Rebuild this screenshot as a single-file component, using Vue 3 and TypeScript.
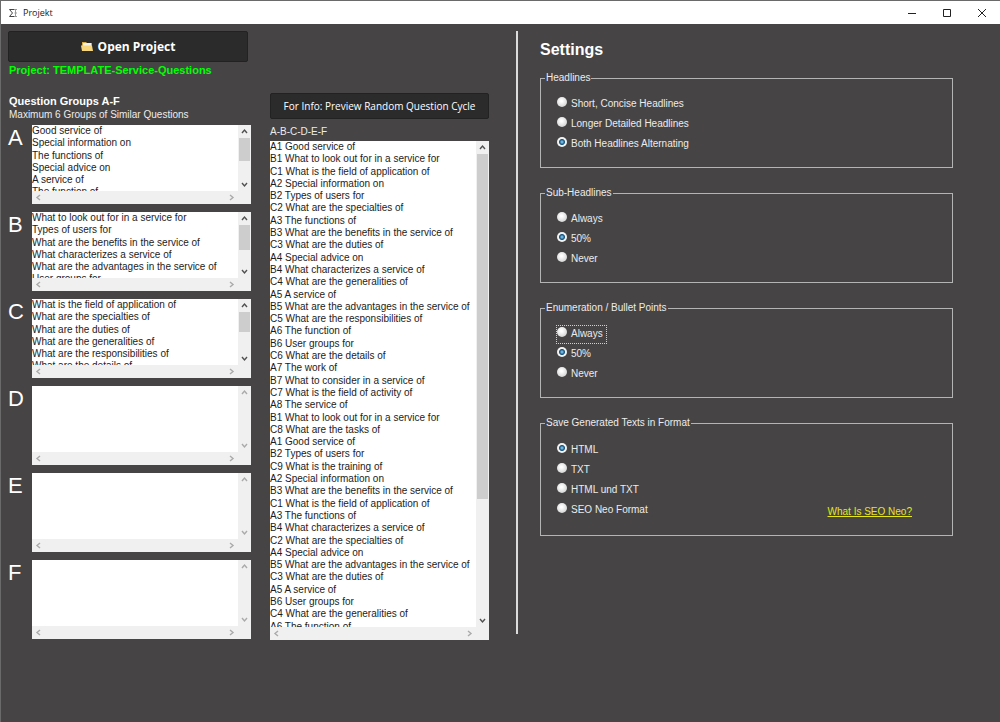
<script setup lang="ts">
import { reactive } from 'vue'

interface Group {
  letter: string
  lines: string[]
  thumb: number
}

interface Setting {
  key: string
  title: string
  options: string[]
  focused?: string
  link?: string
}

const groups: Group[] = [
  {
    letter: 'A',
    thumb: 23,
    lines: ['Good service of', 'Special information on', 'The functions of', 'Special advice on', 'A service of', 'The function of', 'The work of', 'The service of'],
  },
  {
    letter: 'B',
    thumb: 25,
    lines: ['What to look out for in a service for', 'Types of users for', 'What are the benefits in the service of', 'What characterizes a service of', 'What are the advantages in the service of', 'User groups for', 'What to consider in a service of'],
  },
  {
    letter: 'C',
    thumb: 20,
    lines: ['What is the field of application of', 'What are the specialties of', 'What are the duties of', 'What are the generalities of', 'What are the responsibilities of', 'What are the details of', 'What is the field of activity of', 'What are the tasks of', 'What is the training of'],
  },
  { letter: 'D', thumb: 0, lines: [] },
  { letter: 'E', thumb: 0, lines: [] },
  { letter: 'F', thumb: 0, lines: [] },
]

// One A, B and C question per turn; every group restarts when it runs out.
const preview: string[] = []
for (let turn = 0; turn < 14; turn++) {
  for (const g of groups.slice(0, 3)) {
    const i = turn % g.lines.length
    preview.push(`${g.letter}${i + 1} ${g.lines[i]}`)
  }
}

const settings: Setting[] = [
  { key: 'headlines', title: 'Headlines', options: ['Short, Concise Headlines', 'Longer Detailed Headlines', 'Both Headlines Alternating'] },
  { key: 'sub', title: 'Sub-Headlines', options: ['Always', '50%', 'Never'] },
  { key: 'bullets', title: 'Enumeration / Bullet Points', options: ['Always', '50%', 'Never'], focused: 'Always' },
  { key: 'format', title: 'Save Generated Texts in Format', options: ['HTML', 'TXT', 'HTML und TXT', 'SEO Neo Format'], link: 'What Is SEO Neo?' },
]

const chosen = reactive<Record<string, string>>({
  headlines: 'Both Headlines Alternating',
  sub: '50%',
  bullets: '50%',
  format: 'HTML',
})
</script>

<template>
  <div class="window">
    <header class="titlebar">
      <svg class="app-icon" viewBox="0 0 10 10" aria-hidden="true">
        <path d="M6 1.5H1.5L4.5 5L1.5 8.5H6" />
        <path class="thin" d="M7.5 1V9M6 1.5H9M6 8.5H9M6.5 5H9" />
      </svg>
      <span class="title">Projekt</span>
      <div class="controls">
        <button type="button" aria-label="Minimize"><svg viewBox="0 0 10 10"><path d="M1 5.5H9" /></svg></button>
        <button type="button" aria-label="Maximize"><svg viewBox="0 0 10 10"><path d="M1.5 1.5H8.5V8.5H1.5Z" /></svg></button>
        <button type="button" aria-label="Close"><svg viewBox="0 0 10 10"><path d="M1 1L9 9M9 1L1 9" /></svg></button>
      </div>
    </header>

    <main class="workspace">
      <section class="questions">
        <button type="button" class="dark open">
          <svg class="folder" viewBox="0 0 12 11" aria-hidden="true">
            <path d="M1 1H5L6 2H11V9H1Z" fill="#d9a845" />
            <path d="M2 2H10V6H2Z" fill="#f4f1e6" />
            <path d="M0 4.5H11L12 10H1Z" fill="#f8d77c" />
          </svg>
          Open Project
        </button>
        <p class="project">Project: TEMPLATE-Service-Questions</p>
        <h2>Question Groups A-F</h2>
        <p class="hint">Maximum 6 Groups of Similar Questions</p>

        <div class="groups">
          <div v-for="g in groups" :key="g.letter" class="group">
            <label :for="'group-' + g.letter">{{ g.letter }}</label>
            <div class="pane" :class="{ idle: !g.thumb }">
              <textarea :id="'group-' + g.letter" wrap="off" spellcheck="false" :value="g.lines.join('\n')"></textarea>
              <div class="vbar">
                <button type="button" aria-label="Scroll up"><svg viewBox="0 0 7 7"><path d="M1 5L3.5 2L6 5" /></svg></button>
                <div class="thumb" :style="{ height: g.thumb + 'px' }"></div>
                <button type="button" class="last" aria-label="Scroll down"><svg viewBox="0 0 7 7"><path d="M1 2L3.5 5L6 2" /></svg></button>
              </div>
              <div class="hbar">
                <button type="button" aria-label="Scroll left"><svg viewBox="0 0 7 7"><path d="M5 1L2 3.5L5 6" /></svg></button>
                <button type="button" aria-label="Scroll right"><svg viewBox="0 0 7 7"><path d="M2 1L5 3.5L2 6" /></svg></button>
              </div>
            </div>
          </div>
        </div>
      </section>

      <section class="cycle">
        <button type="button" class="dark info">For Info: Preview Random Question Cycle</button>
        <label for="preview">A-B-C-D-E-F</label>
        <div class="pane">
          <textarea id="preview" wrap="off" spellcheck="false" :value="preview.join('\n')"></textarea>
          <div class="vbar">
            <button type="button" aria-label="Scroll up"><svg viewBox="0 0 7 7"><path d="M1 5L3.5 2L6 5" /></svg></button>
            <div class="thumb long"></div>
            <button type="button" class="last" aria-label="Scroll down"><svg viewBox="0 0 7 7"><path d="M1 2L3.5 5L6 2" /></svg></button>
          </div>
          <div class="hbar">
            <button type="button" aria-label="Scroll left"><svg viewBox="0 0 7 7"><path d="M5 1L2 3.5L5 6" /></svg></button>
            <button type="button" aria-label="Scroll right"><svg viewBox="0 0 7 7"><path d="M2 1L5 3.5L2 6" /></svg></button>
          </div>
        </div>
      </section>

      <div class="divider"></div>

      <section class="settings">
        <h1>Settings</h1>
        <fieldset v-for="s in settings" :key="s.key">
          <legend>{{ s.title }}</legend>
          <div class="body" :class="{ linked: s.link }">
            <div class="options">
              <label v-for="o in s.options" :key="o" :class="{ focused: s.focused === o }">
                <input v-model="chosen[s.key]" type="radio" :name="s.key" :value="o" />
                <span>{{ o }}</span>
              </label>
            </div>
            <a v-if="s.link" href="#seo-neo">{{ s.link }}</a>
          </div>
        </fieldset>
      </section>
    </main>
  </div>
</template>

<style>
body {
  margin: 0;
  background: #464445;
}
</style>

<style scoped>
.window {
  box-sizing: border-box;
  min-height: 100vh;
  border: 1px solid #6a6a6a;
  border-width: 1px 0 0 1px;
  background: #464445;
  color: #ececec;
  font-family: "Liberation Sans", Arial, sans-serif;
  font-size: 10px;
  line-height: 14px;
}

h1,
h2,
p {
  margin: 0;
}

button {
  padding: 0;
  border: 0;
  background: none;
  color: inherit;
  font: inherit;
}

svg {
  display: block;
  fill: none;
}

.titlebar {
  display: flex;
  align-items: center;
  height: 23px;
  padding-left: 7px;
  background: #fff;
  color: #222;
}

.app-icon {
  width: 10px;
  height: 10px;
  stroke: #444;
}

.app-icon .thin {
  stroke: #999;
}

.title {
  margin-left: 5px;
  font: 9px/14px "Open Sans", "Noto Sans", sans-serif;
}

.controls {
  display: flex;
  margin: 0 1px 0 auto;
}

.controls button {
  display: grid;
  place-items: center;
  width: 35px;
  height: 23px;
}

.controls svg {
  width: 10px;
  height: 10px;
  stroke: #222;
}

.workspace {
  display: grid;
  grid-template-columns: minmax(0, 262fr) minmax(0, 246fr) 2px minmax(0, 435fr);
  padding: 7px 47px 0 7px;
}

.questions {
  margin-right: 19px;
}

.dark {
  display: flex;
  align-items: center;
  justify-content: center;
  box-sizing: border-box;
  border: 1px solid #222;
  border-radius: 2px;
  background: #2c2b2c;
  color: #fff;
  font-family: "Open Sans", "Noto Sans", sans-serif;
}

.open {
  gap: 5px;
  width: calc(100% - 3px);
  height: 31px;
  font-size: 12px;
  font-weight: 700;
}

.folder {
  width: 12px;
  height: 11px;
}

.project,
h2,
.hint {
  padding-left: 1px;
}

.project {
  margin-top: 1px;
  color: #0f0;
  font-size: 11px;
  font-weight: 700;
}

h2 {
  margin-top: 17px;
  color: #fff;
  font-size: 11px;
  line-height: 14px;
}

.groups {
  display: grid;
  gap: 8px;
  margin-top: 3px;
}

.group {
  display: flex;
  height: 79px;
}

.group label {
  width: 24px;
  color: #fff;
  font-size: 22px;
  line-height: 26px;
}

.pane {
  flex: 1;
  display: grid;
  grid-template-columns: minmax(0, 1fr) 13px;
  grid-template-rows: minmax(0, 1fr) 13px;
  background: #f0f0f0;
  color: #505050;
}

.idle {
  color: #aaa;
}

textarea {
  display: block;
  box-sizing: border-box;
  width: 100%;
  height: 100%;
  padding: 0;
  border: 0;
  outline: 0;
  resize: none;
  overflow: hidden;
  background: #fff;
  color: #1c1c1c;
  font: 10px/1.23 "Liberation Sans", Arial, sans-serif;
}

.vbar {
  display: flex;
  flex-direction: column;
}

.pane button {
  display: grid;
  place-items: center;
  width: 13px;
  height: 13px;
}

.pane svg {
  width: 7px;
  height: 7px;
  stroke: currentColor;
  stroke-width: 1.4;
}

.thumb {
  margin: 0 1px;
  background: #cdcdcd;
}

.long {
  height: 71%;
}

.vbar .last {
  margin-top: auto;
}

.hbar {
  display: flex;
  justify-content: space-between;
  color: #aaa;
}

.cycle {
  display: flex;
  flex-direction: column;
  margin: 62px 27px -1px 0;
}

.info {
  height: 26px;
  font-size: 10px;
}

.cycle label {
  margin: 6px 0 2px;
}

.divider {
  margin-bottom: 5px;
  background: #dcdcdc;
}

.settings {
  margin-left: 22px;
}

h1 {
  margin: 8px 0 10px;
  color: #fff;
  font-size: 16px;
  line-height: 22px;
}

fieldset {
  min-width: 0;
  margin: 0 0 18px;
  padding: 0;
  border: 1px solid #b4b4b4;
}

legend {
  margin-left: 4px;
  padding: 0 1px;
}

.body {
  display: flex;
  justify-content: space-between;
  align-items: flex-end;
  padding: 11px 40px 14px 16px;
}

.linked {
  padding-top: 12px;
  padding-bottom: 16px;
}

.options {
  display: grid;
  justify-items: start;
  gap: 3px;
}

.options label {
  display: flex;
  gap: 4px;
  height: 17px;
  padding-right: 3px;
  line-height: 16px;
}

.options .focused {
  outline: 1px dotted #d0d0d0;
}

input {
  appearance: none;
  width: 10px;
  height: 10px;
  margin: 1px 0 0;
  border-radius: 50%;
  background: radial-gradient(circle at 45% 40%, #fff 10%, #d8d8d8 70%, #999 100%);
}

input:checked {
  background: radial-gradient(circle, #6db4dc 0 10%, #14507c 35%, #f2f2f2 50%);
}

a {
  color: #e6e619;
}
</style>
